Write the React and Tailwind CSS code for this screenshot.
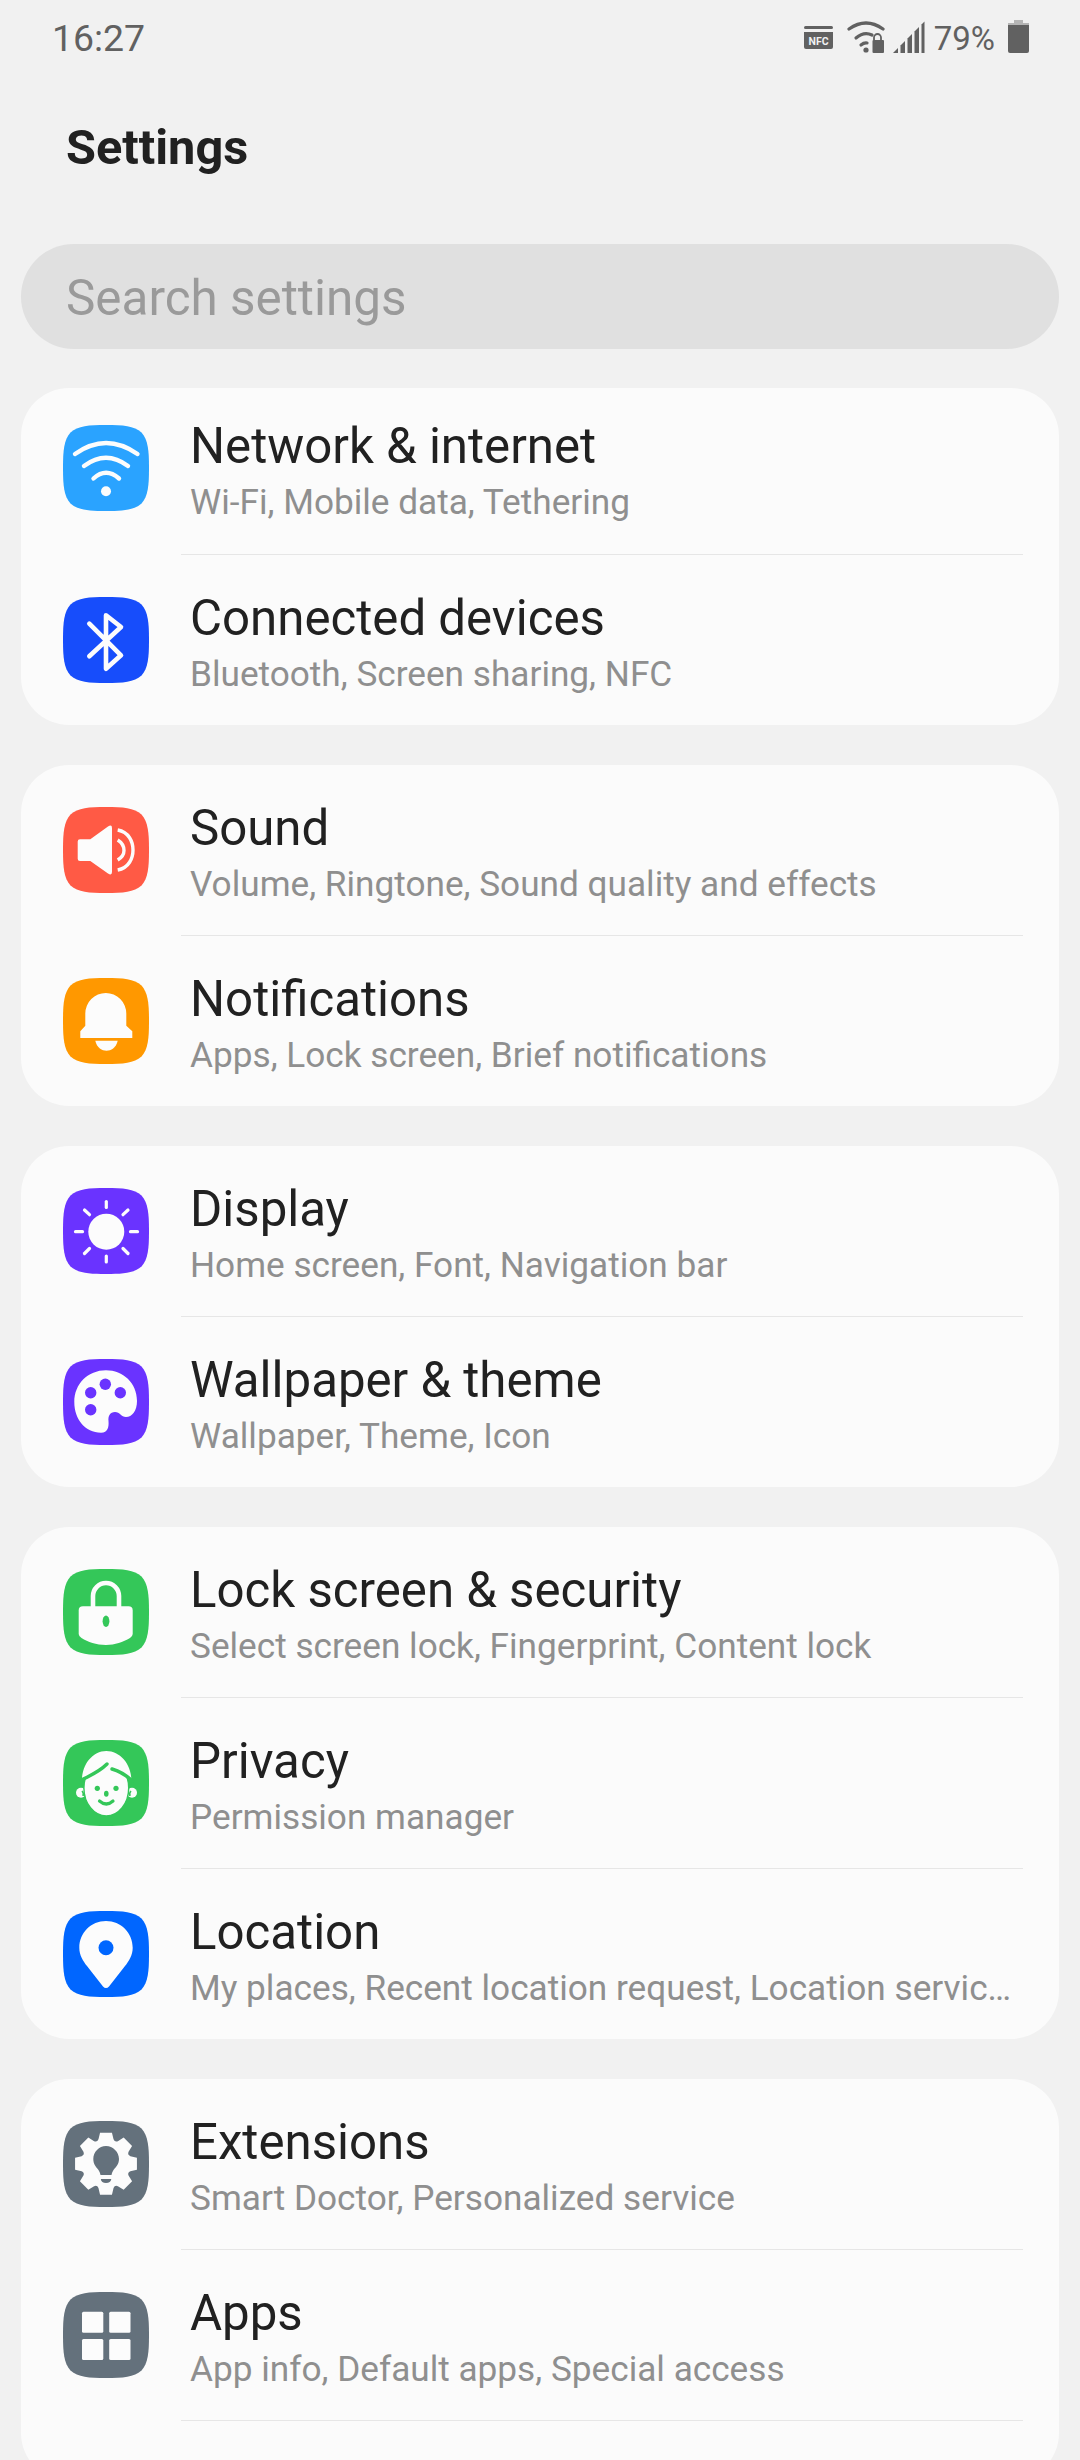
const FONT = "font-['Roboto',sans-serif]";

const Squircle = ({ color, children }) => (
  <svg viewBox="0 0 86 86" className="w-[86px] h-[86px] shrink-0">
    <path d="M43 0C60 0 71 0.8 78.5 7.5C85.2 15 86 26 86 43C86 60 85.2 71 78.5 78.5C71 85.2 60 86 43 86C26 86 15 85.2 7.5 78.5C0.8 71 0 60 0 43C0 26 0.8 15 7.5 7.5C15 0.8 26 0 43 0Z" fill={color} />
    {children}
  </svg>
);

const W = "#fcfcfc";

const WifiIcon = () => (
  <Squircle color="#2aa3ff">
    <g fill="none" stroke={W} strokeWidth="4.4" strokeLinecap="round">
      <path d="M12 29Q43 7 74.5 29" />
      <path d="M21 41Q43 24.5 65 41" />
      <path d="M30.5 53.5Q43 42 56 53.5" />
    </g>
    <circle cx="43" cy="66.3" r="5" fill={W} />
  </Squircle>
);

const BluetoothIcon = () => (
  <Squircle color="#174dfb">
    <path d="M26.3 26.7L58 58.3L43 71.7V18.3L58 30L26.3 59.3" fill="none" stroke={W} strokeWidth="4.6" strokeLinecap="round" strokeLinejoin="round" />
  </Squircle>
);

const SoundIcon = () => (
  <Squircle color="#ff5a45">
    <path d="M17 32.3H27.3L45 19.5Q49 17 49 21V65Q49 69 45 66.5L27.3 54H17Q14.7 54 14.7 51.7V34.6Q14.7 32.3 17 32.3Z" fill={W} />
    <g fill="none" stroke={W} strokeWidth="3.4">
      <path d="M54.7 23C66 25 70 35 70 43C70 51 66 61 54.7 63" />
      <path d="M54.7 33C58 35 61 39 61 43.5C61 48 58 51 54.7 53" />
    </g>
  </Squircle>
);

const BellIcon = () => (
  <Squircle color="#ff9800">
    <path d="M22.3 47.7V35.5A20.5 20.5 0 0 1 63.3 35.5V47.7L69.3 53.3V60H17.3V53.3Z" fill={W} />
    <path d="M32.3 62.7H54.7C53 70 48 72.7 43.5 72.7C39 72.7 34 70 32.3 62.7Z" fill={W} />
  </Squircle>
);

const SunIcon = () => (
  <Squircle color="#6a33ff">
    <circle cx="43.3" cy="43.7" r="18" fill={W} />
    <g stroke={W} strokeWidth="3.2" strokeLinecap="round">
      <path d="M43.3 13.5V19.5" />
      <path d="M43.3 68V74" />
      <path d="M12.5 43.7H19.5" />
      <path d="M67.5 43.7H74.5" />
      <path d="M21.5 22L26.5 26.7" />
      <path d="M65 22L60 26.7" />
      <path d="M21.5 65.5L26.5 60.5" />
      <path d="M65 65.5L60 60.5" />
    </g>
  </Squircle>
);

const PaletteIcon = () => (
  <Squircle color="#6a33ff">
    <path d="M43 11.3C60 11.3 74 24 74 42C74 52 69 58 63 58C58 58 57 53 52 53C47 53 45 57 45.5 62C46 68 45 73.7 38 73.7C22 73.7 11.3 60 11.3 43C11.3 25 25 11.3 43 11.3Z" fill={W} />
    <g fill="#6a33ff">
      <circle cx="42.3" cy="25.3" r="5.7" />
      <circle cx="27.7" cy="33.7" r="5.7" />
      <circle cx="57.3" cy="33.7" r="5.7" />
      <circle cx="27.7" cy="50.7" r="5.7" />
    </g>
  </Squircle>
);

const LockIcon = () => (
  <Squircle color="#34c759">
    <path d="M30 38V27A13 13 0 0 1 56 27V38" fill="none" stroke={W} strokeWidth="4.6" />
    <path d="M20 37.3H65.5Q69.7 37.3 69.7 41.5V65Q69.7 67 67 69C60 73 52 76 43 76C33 76 25 73 18.5 69Q15.7 67 15.7 65V41.5Q15.7 37.3 20 37.3Z" fill={W} />
    <ellipse cx="43" cy="52.3" rx="3.4" ry="5.7" fill="#34c759" />
  </Squircle>
);

const PrivacyIcon = () => (
  <Squircle color="#34c759">
    <circle cx="18" cy="52.7" r="5" fill={W} />
    <circle cx="69" cy="52.7" r="5" fill={W} />
    <path d="M19 51Q21 53 20 56" stroke="#34c759" strokeWidth="1.6" fill="none" />
    <path d="M68 51Q66 53 67 56" stroke="#34c759" strokeWidth="1.6" fill="none" />
    <ellipse cx="43.3" cy="48" rx="22.4" ry="28" fill={W} stroke="#34c759" strokeWidth="1.4" />
    <path d="M19 40C19 24 30 11 43.3 11C57 11 68.5 24 68.5 41L47 28L43 24Z" fill={W} />
    <path d="M18.5 40C28 35 36 32 44 24" fill="none" stroke="#34c759" strokeWidth="3.4" strokeLinecap="round" />
    <path d="M49 29C56 31 63 35 69.5 41" fill="none" stroke="#34c759" strokeWidth="3.4" strokeLinecap="round" />
    <circle cx="34.3" cy="48.3" r="2.6" fill="#34c759" />
    <circle cx="53" cy="48.3" r="2.6" fill="#34c759" />
    <ellipse cx="43.3" cy="53.7" rx="2.3" ry="3" fill="#34c759" />
    <path d="M36.5 61Q43.3 67 50 61" fill="none" stroke="#34c759" strokeWidth="3.2" strokeLinecap="round" />
  </Squircle>
);

const PinIcon = () => (
  <Squircle color="#0066ff">
    <path d="M43 10C58 10 69.7 22 69.7 36.7C69.7 44 66 50 62 55L46 75.5Q43 78.5 40 75.5L24 55C20 50 16.3 44 16.3 36.7C16.3 22 28 10 43 10Z" fill={W} />
    <circle cx="43" cy="36.7" r="7.5" fill="#0066ff" />
  </Squircle>
);

const gearPath = (() => {
  const cx = 43, cy = 42.7, R = 31.5, r = 25.5;
  const pt = (a, rad) => `${(cx + rad * Math.cos(a)).toFixed(2)} ${(cy + rad * Math.sin(a)).toFixed(2)}`;
  let d = "";
  for (let i = 0; i < 8; i++) {
    const a = (i * Math.PI) / 4 - Math.PI / 2;
    const t = 0.19;
    const b = 0.3;
    d += `${i === 0 ? "M" : "L"}${pt(a - b, r)}L${pt(a - t, R)}L${pt(a + t, R)}L${pt(a + b, r)}`;
    d += `Q${pt(a + Math.PI / 8, r - 2.5)} ${pt(a + Math.PI / 4 - b, r)}`;
  }
  return d + "Z";
})();

const GearIcon = () => (
  <Squircle color="#64717c">
    <path d={gearPath} fill={W} />
    <path d="M43 25C50 25 56 31 56 38C56 43 53 46 50.5 49C49.5 50.5 49 52 48.5 54H37.5C37 52 36.5 50.5 35.5 49C33 46 30.3 43 30.3 38C30.3 31 36 25 43 25Z" fill="#64717c" />
    <path d="M37.8 58H48.3C48 60.5 46 62 43 62C40 62 38 60.5 37.8 58Z" fill="#64717c" />
  </Squircle>
);

const AppsIcon = () => (
  <Squircle color="#64717c">
    <g fill={W}>
      <rect x="19" y="19.7" width="21.3" height="21" rx="1.5" />
      <rect x="46.2" y="19.7" width="21.3" height="21" rx="1.5" />
      <rect x="19" y="47" width="21.3" height="21" rx="1.5" />
      <rect x="46.2" y="47" width="21.3" height="21" rx="1.5" />
    </g>
  </Squircle>
);

const Row = ({ icon, title, sub, divider, short, cut }) => (
  <div>
    <div className={`flex items-center pl-[42px] pr-[36px] ${short ? "h-[166px] pb-[6px]" : "h-[170px]"}`}>
      {icon}
      <div className="ml-[41px] flex-1 min-w-0 pt-[8px]">
        <div className="text-[49.2px] leading-[52px] text-[#212121]">{title}</div>
        <div className={`text-[35.2px] leading-[44px] mt-[8px] text-[#8f8f8f] ${cut ? "truncate" : ""}`}>{sub}</div>
      </div>
    </div>
    {divider && <div className="ml-[160px] mr-[36px] h-px bg-[#e6e6e6]" />}
  </div>
);

const Card = ({ children }) => <div className="rounded-[48px] bg-[#fbfbfb] overflow-hidden">{children}</div>;

export default function App() {
  return (
    <div className={`${FONT} w-[1080px] h-[2460px] overflow-hidden bg-[#f1f1f1]`}>
      <div className="h-[72px] flex items-start justify-between pl-[52px] pr-[51px] pt-[16px] text-[#616161]">
        <span className="text-[37.4px] leading-[44px]">16:27</span>
        <div className="flex items-start">
          <svg viewBox="0 0 29 23" className="w-[29px] h-[23px] mt-[10px]">
            <rect x="0" y="0" width="29" height="3" rx="1.5" fill="#616161" />
            <path d="M0 6H29V21Q29 23 27 23H2Q0 23 0 21Z" fill="#616161" />
            <text x="14.5" y="19" fontSize="10.5" fontWeight="700" fontFamily="Roboto, sans-serif" fill="#f1f1f1" textAnchor="middle">NFC</text>
          </svg>
          <svg viewBox="0 0 38 33" className="w-[38px] h-[33px] ml-[14px] mt-[4px]">
            <g fill="none" stroke="#616161" strokeWidth="3.2" strokeLinecap="round">
              <path d="M2 9Q19 -3 36 9" />
              <path d="M9 18Q17 11 25 15" />
              <path d="M14 25Q17 22.5 20 23" />
            </g>
            <circle cx="19" cy="30" r="2.6" fill="#616161" />
            <path d="M27 20V17.5A3.5 3.5 0 0 1 34 17.5V20" fill="none" stroke="#616161" strokeWidth="1.8" />
            <rect x="25.5" y="20" width="11.5" height="13" rx="1" fill="#616161" />
          </svg>
          <svg viewBox="0 0 32 32" className="w-[32px] h-[32px] ml-[8px] mt-[5px]">
            <path d="M0 32L5 27V32Z" fill="#616161" />
            <path d="M7.5 32V24.5L12 20V32Z" fill="#616161" />
            <path d="M14.5 32V17.5L19 13V32Z" fill="#616161" />
            <path d="M21.5 32V10.5L26 6V32Z" fill="#616161" />
            <path d="M28.5 32V3.5L31.5 0.5V32Z" fill="#616161" />
          </svg>
          <span className="text-[33px] leading-[40px] ml-[9px] mt-[3px]">79%</span>
          <svg viewBox="0 0 21 33" className="w-[21px] h-[33px] ml-[13px] mt-[4px]">
            <path d="M6 0H15V3H21V6H0V3H6Z" fill="#b5b5b5" />
            <path d="M0 5H21V31Q21 33 19 33H2Q0 33 0 31Z" fill="#616161" />
          </svg>
        </div>
      </div>
      <div className="h-[172px] pl-[66px] pt-[48px]">
        <span className="text-[48.7px] leading-[56px] font-bold text-[#212121]">Settings</span>
      </div>
      <div className="mx-[21px] h-[105px] rounded-full bg-[#e0e0e0] flex items-center pl-[45px]">
        <span className="text-[49.4px] leading-[56px] pt-[2px] text-[#9a9a9a]">Search settings</span>
      </div>
      <div className="mx-[21px] mt-[39px] flex flex-col gap-[40px]">
        <Card>
          <Row short divider icon={<WifiIcon />} title="Network & internet" sub="Wi-Fi, Mobile data, Tethering" />
          <Row icon={<BluetoothIcon />} title="Connected devices" sub="Bluetooth, Screen sharing, NFC" />
        </Card>
        <Card>
          <Row divider icon={<SoundIcon />} title="Sound" sub="Volume, Ringtone, Sound quality and effects" />
          <Row icon={<BellIcon />} title="Notifications" sub="Apps, Lock screen, Brief notifications" />
        </Card>
        <Card>
          <Row divider icon={<SunIcon />} title="Display" sub="Home screen, Font, Navigation bar" />
          <Row icon={<PaletteIcon />} title="Wallpaper & theme" sub="Wallpaper, Theme, Icon" />
        </Card>
        <Card>
          <Row divider icon={<LockIcon />} title="Lock screen & security" sub="Select screen lock, Fingerprint, Content lock" />
          <Row divider icon={<PrivacyIcon />} title="Privacy" sub="Permission manager" />
          <Row cut icon={<PinIcon />} title="Location" sub="My places, Recent location request, Location services" />
        </Card>
        <Card>
          <Row divider icon={<GearIcon />} title="Extensions" sub="Smart Doctor, Personalized service" />
          <Row divider icon={<AppsIcon />} title="Apps" sub="App info, Default apps, Special access" />
          <div className="h-[60px]" />
        </Card>
      </div>
    </div>
  );
}
